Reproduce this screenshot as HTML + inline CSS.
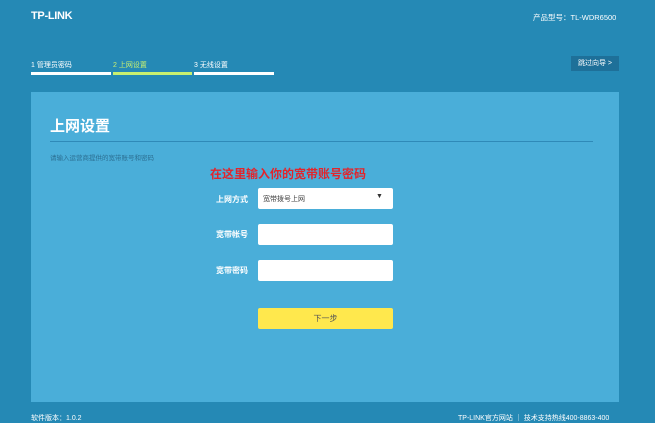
<!DOCTYPE html>
<html><head><meta charset="utf-8"><style>
body{margin:0;width:655px;height:418px;overflow:hidden;background:#2589b5;font-family:"Liberation Sans","Noto Sans CJK SC",sans-serif;color:#fff;position:relative}
.a{position:absolute;white-space:nowrap}
.inp{position:absolute;left:258px;width:135px;height:21px;background:#fff;border-radius:2px}
.lab{position:absolute;width:60px;left:188px;text-align:right;font-size:8px;font-weight:bold}
</style></head><body>
<div class="a" style="left:31px;top:10px;font-size:11px;font-weight:bold;letter-spacing:-0.3px">TP-LINK</div>
<div class="a" style="left:533px;top:12px;font-size:7.5px">产品型号：TL-WDR6500</div>
<div class="a" style="left:31px;top:60px;font-size:7px">1 管理员密码</div>
<div class="a" style="left:113px;top:60px;font-size:7px;color:#c8f070">2 上网设置</div>
<div class="a" style="left:194px;top:60px;font-size:7px">3 无线设置</div>
<div class="a" style="left:31px;top:72px;width:80px;height:3px;background:#fff"></div>
<div class="a" style="left:113px;top:72px;width:79px;height:3px;background:#c8f070"></div>
<div class="a" style="left:194px;top:72px;width:80px;height:3px;background:#fff"></div>
<div class="a" style="left:571px;top:56px;width:48px;height:15px;background:#1e7099;font-size:7px;line-height:15px;text-align:center">跳过向导 &gt;</div>
<div class="a" style="left:31px;top:92px;width:588px;height:310px;background:#4aaed9"></div>
<div class="a" style="left:50px;top:115px;font-size:15px;font-weight:bold">上网设置</div>
<div class="a" style="left:50px;top:141px;width:543px;height:1px;background:#2f8ab8"></div>
<div class="a" style="left:50px;top:152px;font-size:6.5px;color:#2c6f92">请输入运营商提供的宽带账号和密码</div>
<div class="a" style="left:210px;top:165px;font-size:12px;font-weight:bold;color:#e3242b">在这里输入你的宽带账号密码</div>
<div class="lab" style="top:194px">上网方式</div>
<div class="lab" style="top:229px">宽带帐号</div>
<div class="lab" style="top:265px">宽带密码</div>
<div class="inp" style="top:188px"><span class="a" style="left:5px;top:6px;font-size:7px;color:#444">宽带拨号上网</span><span class="a" style="left:118px;top:5px;font-size:7px;color:#333">▼</span></div>
<div class="inp" style="top:224px"></div>
<div class="inp" style="top:260px"></div>
<div class="a" style="left:258px;top:308px;width:135px;height:21px;background:#ffe84d;border-radius:2px;font-size:8px;color:#555;text-align:center;line-height:21px">下一步</div>
<div class="a" style="left:31px;top:413px;font-size:7px">软件版本：1.0.2</div>
<div class="a" style="left:458px;top:413px;font-size:7px">TP-LINK官方网站 ｜ 技术支持热线400-8863-400</div>
</body></html>
